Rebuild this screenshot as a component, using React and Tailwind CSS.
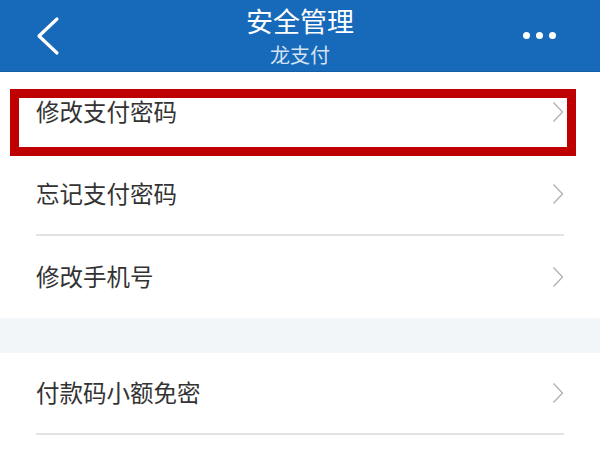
export default function App() {
  const groups = [
    ['修改支付密码', '忘记支付密码', '修改手机号'],
    ['付款码小额免密'],
  ];

  const Chevron = () => (
    <svg width="12" height="22" viewBox="0 0 12 22" className="shrink-0">
      <path d="M1.5 1.5 L10.5 11 L1.5 20.5" fill="none" stroke="#b3b3b3" strokeWidth="1.4" />
    </svg>
  );

  return (
    <div
      className="relative w-[600px] h-[449px] overflow-hidden bg-white"
      style={{ fontFamily: '"Noto Sans CJK SC", "Noto Sans", sans-serif' }}
    >
      {/* 顶部导航 */}
      <header className="h-[72px] bg-[#1769b9] border-b border-[#125fa8] flex items-start px-[36px] text-white">
        <div className="w-[80px] pt-[16px]">
          <svg width="24" height="40" viewBox="0 0 24 40">
            <path d="M21 3 L3 20 L21 37" fill="none" stroke="#fff" strokeWidth="3.2" strokeLinecap="round" strokeLinejoin="round" />
          </svg>
        </div>
        <div className="flex-1 flex flex-col items-center pt-[5px]">
          <div className="text-[27px] leading-[32px]">安全管理</div>
          <div className="text-[20px] leading-[24px] mt-[6px] text-[#d3e2f3]">龙支付</div>
        </div>
        <div className="w-[80px] flex justify-end gap-[6px] pr-[8px] pt-[32px]">
          <span className="w-[7px] h-[7px] rounded-full bg-white" />
          <span className="w-[7px] h-[7px] rounded-full bg-white" />
          <span className="w-[7px] h-[7px] rounded-full bg-white" />
        </div>
      </header>

      {groups.map((items, gi) => (
        <div key={gi}>
          {gi > 0 && <div className="h-[35px] bg-[#f2f6f9]" />}
          {items.map((label, i) => (
            <div key={label} className="pl-[36px] pr-[36px]">
              <div
                className={`h-[82px] flex items-center justify-between ${
                  gi === 0 && i === items.length - 1 ? '' : 'border-b-2 border-[#e2e2e2]'
                }`}
              >
                <span className="text-[23.5px] text-[#333]">{label}</span>
                <Chevron />
              </div>
            </div>
          ))}
        </div>
      ))}

      {/* 标注框 */}
      <div className="absolute left-[10px] top-[89px] w-[566px] h-[67px] border-[9px] border-[#bf0000]" />
    </div>
  );
}
